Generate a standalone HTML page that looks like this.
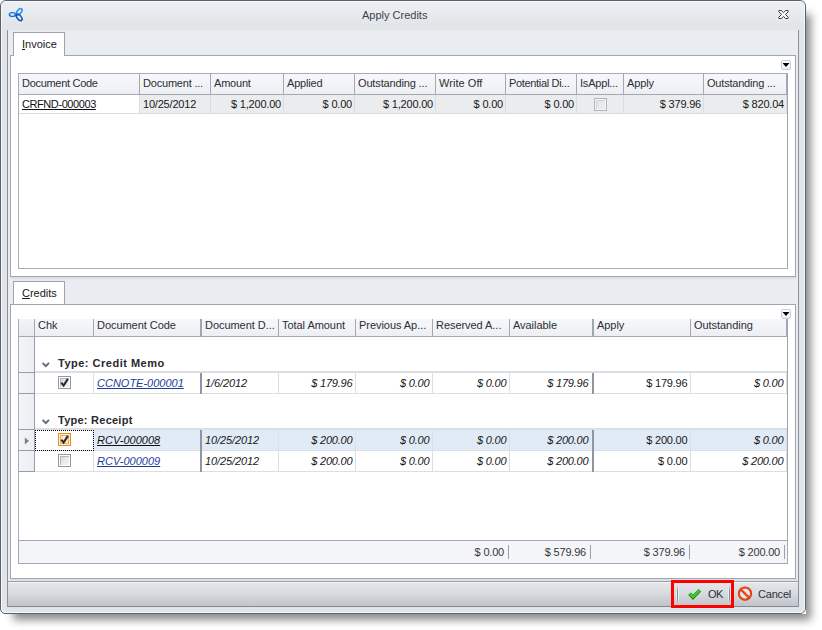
<!DOCTYPE html>
<html>
<head>
<meta charset="utf-8">
<title>Apply Credits</title>
<style>
html,body{margin:0;padding:0;}
body{width:822px;height:630px;background:#fff;position:relative;overflow:hidden;
 font-family:"Liberation Sans",Arial,sans-serif;font-size:11px;color:#16181b;letter-spacing:-0.2px;}
.a{position:absolute;box-sizing:border-box;}
.t{position:absolute;white-space:nowrap;line-height:13px;height:13px;}
.r{text-align:right;}
.i{font-style:italic;}
.b{font-weight:bold;}
.lnk{color:#1f3d9c;text-decoration:underline;font-style:italic;letter-spacing:0;}
/* window */
#shadow{border-radius:6px 6px 5px 5px;box-shadow:9px 10px 9px -4px rgba(0,0,0,.45);}
#win{left:0;top:0;width:806px;height:614px;border:1px solid #59616d;border-radius:6px 6px 6px 5px;background:#e1e5e9;}
#winhi{left:1px;top:1px;width:804px;height:612px;border:1px solid #f7f8f9;border-radius:5px;}
#title{left:2px;top:2px;width:802px;height:28px;background:linear-gradient(#eef0f3,#e6e9ec 55%,#e2e6e8 80%,#e2e6e8);border-radius:4px 4px 0 0;}
#panel{left:7px;top:30px;width:792px;height:552px;background:#e9ecf1;border-left:1px solid #8c9199;border-right:1px solid #8c9199;}
.page{background:#fff;border:1px solid #a0a6b0;}
.tab{background:#fff;border:1px solid #9da3ae;border-bottom:none;}
/* grid */
.grid{border:1px solid #a8aeb8;background:#fff;}
.hd{background:linear-gradient(#f6f7fa,#f2f4f7 50%,#eceef3);border-right:1px solid #a3a9b3;border-bottom:1px solid #a3a9b3;}
.hd .t{left:3px;top:3px;color:#2a2e35;letter-spacing:-0.2px;}
.cell{background:#ebecee;border-right:1px solid #d9dbdf;border-bottom:1px solid #d9dbdf;}
.cw{background:#fff;border-right:1px solid #dcdee2;border-bottom:1px solid #dcdee2;}
.cs{background:#e1ebf6;border-right:1px solid #dcdfe4;border-bottom:1px solid #dcdfe4;}
.ind{background:linear-gradient(90deg,#f3f4f7,#eceef2);border-right:1px solid #969da8;border-bottom:1px solid #969da8;}
.cb{width:13px;height:13px;border:1px solid #8e99a8;background:#fff;}
.cb:before{content:"";position:absolute;left:1px;top:1px;width:9px;height:9px;background:linear-gradient(135deg,#d0d1d3,#e8e8e9 45%,#f3f3f3);box-shadow:inset 1px 1px 0 #b6b7ba;}
.cb.d{border-color:#b1b5bc;background:#f4f4f5;}
.cb.d:before{background:linear-gradient(135deg,#e2e2e4,#efeff0);box-shadow:inset 1px 1px 0 #d2d3d6;}
.cb.h{border-color:#d9932f;background:#fdefcc;}
.cb.h:before{background:#fbe8d2;box-shadow:inset 0 0 0 1px #f5a660;}
.thick{background:#8f96a0;}
</style>
</head>
<body>
<div id="shadow" class="a " style="left:0px;top:0px;width:806px;height:614px;"></div>
<div class="a " style="left:801px;top:609px;width:5px;height:5px;background:#fff"></div>
<div id="win" class="a " style="left:0px;top:0px;width:806px;height:614px;"></div>
<div id="winhi" class="a " style="left:1px;top:1px;width:804px;height:612px;"></div>
<div id="title" class="a " style="left:2px;top:2px;width:802px;height:28px;"></div>
<div id="panel" class="a " style="left:7px;top:30px;width:792px;height:552px;"></div>
<svg class="a" style="left:6px;top:5px" width="20" height="19" viewBox="6 5 20 19">
<g fill="none" stroke-width="1.5">
<ellipse cx="12.4" cy="14.5" rx="3.0" ry="1.9" stroke="#0f6fe0" stroke-width="1.4"/>
<ellipse cx="19.2" cy="11.8" rx="3.8" ry="2.0" transform="rotate(-50 19.2 11.8)" stroke="#2590f2"/>
<ellipse cx="19.2" cy="17.4" rx="3.8" ry="2.0" transform="rotate(50 19.2 17.4)" stroke="#0c55b8"/>
</g></svg>
<div id="ttl" class="t " style="left:362px;top:9px;color:#3a424e;letter-spacing:0">Apply Credits</div>
<svg class="a" style="left:778px;top:10px" width="11" height="9" viewBox="0 0 11 9">
<path d="M1 0.5 L3.3 0.5 L5.5 2.6 L7.7 0.5 L10 0.5 Q10.8 1.1 10.2 1.8 L7.4 4.5 L10.2 7.2 Q10.8 7.9 10 8.5 L7.7 8.5 L5.5 6.4 L3.3 8.5 L1 8.5 Q0.2 7.9 0.8 7.2 L3.6 4.5 L0.8 1.8 Q0.2 1.1 1 0.5 Z" fill="#fff" stroke="#33373d" stroke-width="1" stroke-linejoin="round"/>
</svg>
<div class="a page" style="left:10px;top:55px;width:786px;height:222px;"></div>
<div class="a tab" style="left:13px;top:32px;width:52px;height:24px;"></div>
<div id="tabinv" class="t " style="left:22px;top:38px;letter-spacing:0"><u>I</u>nvoice</div>
<div class="a " style="left:781px;top:60px;width:10px;height:10px;border:1px solid #c9cdd4;border-radius:2px;background:linear-gradient(#fff,#eceef2);"></div>
<svg class="a" style="left:782px;top:63px" width="8" height="4" viewBox="0 0 8 4"><path d="M0.5 0 L7.5 0 L4 4 Z" fill="#000"/></svg>
<div class="a grid" style="left:18px;top:73px;width:770px;height:196px;"></div>
<div class="a hd" style="left:19px;top:74px;width:121px;height:21px;"><div class="t" id="h1_0" style="letter-spacing:-0.3px">Document Code</div></div>
<div class="a cw" style="left:19px;top:95px;width:121px;height:19px;"></div>
<div id="v1_0" class="t " style="left:22px;top:98px;color:#111;letter-spacing:-0.42px"><u>CRFND-000003</u></div>
<div class="a hd" style="left:140px;top:74px;width:71px;height:21px;"><div class="t" id="h1_1" style="letter-spacing:-0.2px">Document ...</div></div>
<div class="a cell" style="left:140px;top:95px;width:71px;height:19px;"></div>
<div id="v1_1" class="t " style="left:143px;top:98px;">10/25/2012</div>
<div class="a hd" style="left:211px;top:74px;width:73px;height:21px;"><div class="t" id="h1_2" style="letter-spacing:-0.2px">Amount</div></div>
<div class="a cell" style="left:211px;top:95px;width:73px;height:19px;"></div>
<div id="v1_2" class="t r " style="right:541px;top:98px;">$ 1,200.00</div>
<div class="a hd" style="left:284px;top:74px;width:71px;height:21px;"><div class="t" id="h1_3" style="letter-spacing:-0.2px">Applied</div></div>
<div class="a cell" style="left:284px;top:95px;width:71px;height:19px;"></div>
<div id="v1_3" class="t r " style="right:470px;top:98px;">$ 0.00</div>
<div class="a hd" style="left:355px;top:74px;width:81px;height:21px;"><div class="t" id="h1_4" style="letter-spacing:-0.15px">Outstanding ...</div></div>
<div class="a cell" style="left:355px;top:95px;width:81px;height:19px;"></div>
<div id="v1_4" class="t r " style="right:389px;top:98px;">$ 1,200.00</div>
<div class="a hd" style="left:436px;top:74px;width:70px;height:21px;"><div class="t" id="h1_5" style="letter-spacing:0.05px">Write Off</div></div>
<div class="a cell" style="left:436px;top:95px;width:70px;height:19px;"></div>
<div id="v1_5" class="t r " style="right:319px;top:98px;">$ 0.00</div>
<div class="a hd" style="left:506px;top:74px;width:71px;height:21px;"><div class="t" id="h1_6" style="letter-spacing:-0.33px">Potential Di...</div></div>
<div class="a cell" style="left:506px;top:95px;width:71px;height:19px;"></div>
<div id="v1_6" class="t r " style="right:248px;top:98px;">$ 0.00</div>
<div class="a hd" style="left:577px;top:74px;width:47px;height:21px;"><div class="t" id="h1_7" style="letter-spacing:-0.2px">IsAppl...</div></div>
<div class="a cell" style="left:577px;top:95px;width:47px;height:19px;"></div>
<div class="a cb d" style="left:594px;top:98px;width:13px;height:13px;"></div>
<div class="a hd" style="left:624px;top:74px;width:80px;height:21px;"><div class="t" id="h1_8" style="letter-spacing:-0.1px">Apply</div></div>
<div class="a cell" style="left:624px;top:95px;width:80px;height:19px;"></div>
<div id="v1_8" class="t r " style="right:121px;top:98px;">$ 379.96</div>
<div class="a hd" style="left:704px;top:74px;width:83px;height:21px;"><div class="t" id="h1_9" style="letter-spacing:-0.2px">Outstanding ...</div></div>
<div class="a cell" style="left:704px;top:95px;width:83px;height:19px;"></div>
<div id="v1_9" class="t r " style="right:38px;top:98px;">$ 820.04</div>
<div class="a " style="left:787px;top:73px;width:1px;height:196px;background:#a0a6b0"></div>
<div class="a page" style="left:10px;top:304px;width:786px;height:275px;"></div>
<div class="a tab" style="left:13px;top:281px;width:52px;height:23px;"></div>
<div class="a " style="left:11px;top:277px;width:786px;height:3px;background:linear-gradient(#d6dae0,#e9ecf1)"></div>
<div id="tabcr" class="t " style="left:22px;top:287px;letter-spacing:0"><u>C</u>redits</div>
<div class="a " style="left:781px;top:309px;width:10px;height:10px;border:1px solid #c9cdd4;border-radius:2px;background:linear-gradient(#fff,#eceef2);"></div>
<svg class="a" style="left:782px;top:312px" width="8" height="4" viewBox="0 0 8 4"><path d="M0.5 0 L7.5 0 L4 4 Z" fill="#000"/></svg>
<div class="a " style="left:18px;top:319px;width:1px;height:245px;background:#a8aeb8"></div>
<div class="a " style="left:787px;top:319px;width:1px;height:245px;background:#a0a6b0"></div>
<div class="a hd" style="left:19px;top:319px;width:16px;height:18px;background:linear-gradient(#f3f4f7,#e7eaef);"></div>
<div class="a hd" style="left:35px;top:319px;width:59px;height:18px;overflow:hidden;"><div class="t" style="top:0px;left:3px;letter-spacing:-0.05px" id="h2_0">Chk</div></div>
<div class="a hd" style="left:94px;top:319px;width:106px;height:18px;overflow:hidden;border-right:none;"><div class="t" style="top:0px;left:3px;letter-spacing:-0.05px" id="h2_1">Document Code</div></div>
<div class="a hd" style="left:202px;top:319px;width:77px;height:18px;overflow:hidden;"><div class="t" style="top:0px;left:3px;letter-spacing:-0.05px" id="h2_2">Document D...</div></div>
<div class="a hd" style="left:279px;top:319px;width:77px;height:18px;overflow:hidden;"><div class="t" style="top:0px;left:3px;letter-spacing:-0.05px" id="h2_3">Total Amount</div></div>
<div class="a hd" style="left:356px;top:319px;width:77px;height:18px;overflow:hidden;"><div class="t" style="top:0px;left:3px;letter-spacing:-0.05px" id="h2_4">Previous Ap...</div></div>
<div class="a hd" style="left:433px;top:319px;width:77px;height:18px;overflow:hidden;"><div class="t" style="top:0px;left:3px;letter-spacing:-0.05px" id="h2_5">Reserved A...</div></div>
<div class="a hd" style="left:510px;top:319px;width:82px;height:18px;overflow:hidden;border-right:none;"><div class="t" style="top:0px;left:3px;letter-spacing:-0.05px" id="h2_6">Available</div></div>
<div class="a hd" style="left:594px;top:319px;width:97px;height:18px;overflow:hidden;"><div class="t" style="top:0px;left:3px;letter-spacing:-0.05px" id="h2_7">Apply</div></div>
<div class="a hd" style="left:691px;top:319px;width:96px;height:18px;overflow:hidden;"><div class="t" style="top:0px;left:3px;letter-spacing:-0.05px" id="h2_8">Outstanding</div></div>
<div class="a ind" style="left:19px;top:337px;width:16px;height:36px;"></div>
<div class="a ind" style="left:19px;top:373px;width:16px;height:21px;"></div>
<div class="a ind" style="left:19px;top:394px;width:16px;height:36px;"></div>
<div class="a ind" style="left:19px;top:430px;width:16px;height:21px;"></div>
<div class="a ind" style="left:19px;top:451px;width:16px;height:21px;"></div>
<div class="a " style="left:35px;top:371px;width:752px;height:2px;background:linear-gradient(#dde0e4,#d9dce1);"></div>
<svg class="a" style="left:41px;top:362px" width="10" height="7" viewBox="0 0 10 7"><path d="M1.6 0.8 L4.8 4.1 L8.0 0.8" fill="none" stroke="#636973" stroke-width="1.9"/></svg>
<div id="grp1" class="t b" style="left:58px;top:357px;letter-spacing:0.5px;color:#26292e">Type: Credit Memo</div>
<div class="a " style="left:35px;top:428px;width:752px;height:2px;background:linear-gradient(#dde0e4,#d9dce1);"></div>
<svg class="a" style="left:41px;top:419px" width="10" height="7" viewBox="0 0 10 7"><path d="M1.6 0.8 L4.8 4.1 L8.0 0.8" fill="none" stroke="#636973" stroke-width="1.9"/></svg>
<div id="grp2" class="t b" style="left:58px;top:414px;letter-spacing:0.25px;color:#26292e">Type: Receipt</div>
<div class="a cw" style="left:35px;top:373px;width:59px;height:21px;"></div>
<div class="a cw" style="left:94px;top:373px;width:106px;height:21px;border-right:none;"></div>
<div class="a cw" style="left:202px;top:373px;width:77px;height:21px;"></div>
<div class="a cw" style="left:279px;top:373px;width:77px;height:21px;"></div>
<div class="a cw" style="left:356px;top:373px;width:77px;height:21px;"></div>
<div class="a cw" style="left:433px;top:373px;width:77px;height:21px;"></div>
<div class="a cw" style="left:510px;top:373px;width:82px;height:21px;border-right:none;"></div>
<div class="a cw" style="left:594px;top:373px;width:97px;height:21px;"></div>
<div class="a cw" style="left:691px;top:373px;width:96px;height:21px;"></div>
<div class="a cb" style="left:58px;top:376px;width:13px;height:13px;"><svg width="11" height="11" viewBox="0 0 11 11" style="position:absolute;left:0;top:0"><path d="M2.3 5.6 L4.6 8.6 L8.9 1.9" fill="none" stroke="#24272c" stroke-width="2"/></svg></div>
<div id="c_373" class="t lnk" style="left:97px;top:377px;">CCNOTE-000001</div>
<div id="d_373" class="t i" style="left:205px;top:377px;letter-spacing:-0.1px">1/6/2012</div>
<div id="r373_0" class="t r i" style="right:469.6px;top:377px;">$ 179.96</div>
<div id="r373_1" class="t r i" style="right:392.6px;top:377px;">$ 0.00</div>
<div id="r373_2" class="t r i" style="right:315.6px;top:377px;">$ 0.00</div>
<div id="r373_3" class="t r i" style="right:233.60000000000002px;top:377px;">$ 179.96</div>
<div id="r373_4" class="t r " style="right:134.60000000000002px;top:377px;">$ 179.96</div>
<div id="r373_5" class="t r i" style="right:38.60000000000002px;top:377px;">$ 0.00</div>
<div class="a cw" style="left:35px;top:430px;width:59px;height:21px;"></div>
<div class="a cs" style="left:94px;top:430px;width:106px;height:21px;border-right:none;"></div>
<div class="a cs" style="left:202px;top:430px;width:77px;height:21px;"></div>
<div class="a cs" style="left:279px;top:430px;width:77px;height:21px;"></div>
<div class="a cs" style="left:356px;top:430px;width:77px;height:21px;"></div>
<div class="a cs" style="left:433px;top:430px;width:77px;height:21px;"></div>
<div class="a cs" style="left:510px;top:430px;width:82px;height:21px;border-right:none;"></div>
<div class="a cs" style="left:594px;top:430px;width:97px;height:21px;"></div>
<div class="a cs" style="left:691px;top:430px;width:96px;height:21px;"></div>
<div class="a cb h" style="left:58px;top:433px;width:13px;height:13px;"><svg width="11" height="11" viewBox="0 0 11 11" style="position:absolute;left:0;top:0"><path d="M2.3 5.6 L4.6 8.6 L8.9 1.9" fill="none" stroke="#24272c" stroke-width="2"/></svg></div>
<div id="c_430" class="t lnk" style="left:97px;top:434px;color:#111;">RCV-000008</div>
<div id="d_430" class="t i" style="left:205px;top:434px;letter-spacing:-0.1px">10/25/2012</div>
<div id="r430_0" class="t r i" style="right:469.6px;top:434px;">$ 200.00</div>
<div id="r430_1" class="t r i" style="right:392.6px;top:434px;">$ 0.00</div>
<div id="r430_2" class="t r i" style="right:315.6px;top:434px;">$ 0.00</div>
<div id="r430_3" class="t r i" style="right:233.60000000000002px;top:434px;">$ 200.00</div>
<div id="r430_4" class="t r " style="right:134.60000000000002px;top:434px;">$ 200.00</div>
<div id="r430_5" class="t r i" style="right:38.60000000000002px;top:434px;">$ 0.00</div>
<div class="a cw" style="left:35px;top:451px;width:59px;height:21px;"></div>
<div class="a cw" style="left:94px;top:451px;width:106px;height:21px;border-right:none;"></div>
<div class="a cw" style="left:202px;top:451px;width:77px;height:21px;"></div>
<div class="a cw" style="left:279px;top:451px;width:77px;height:21px;"></div>
<div class="a cw" style="left:356px;top:451px;width:77px;height:21px;"></div>
<div class="a cw" style="left:433px;top:451px;width:77px;height:21px;"></div>
<div class="a cw" style="left:510px;top:451px;width:82px;height:21px;border-right:none;"></div>
<div class="a cw" style="left:594px;top:451px;width:97px;height:21px;"></div>
<div class="a cw" style="left:691px;top:451px;width:96px;height:21px;"></div>
<div class="a cb" style="left:58px;top:454px;width:13px;height:13px;"></div>
<div id="c_451" class="t lnk" style="left:97px;top:455px;">RCV-000009</div>
<div id="d_451" class="t i" style="left:205px;top:455px;letter-spacing:-0.1px">10/25/2012</div>
<div id="r451_0" class="t r i" style="right:469.6px;top:455px;">$ 200.00</div>
<div id="r451_1" class="t r i" style="right:392.6px;top:455px;">$ 0.00</div>
<div id="r451_2" class="t r i" style="right:315.6px;top:455px;">$ 0.00</div>
<div id="r451_3" class="t r i" style="right:233.60000000000002px;top:455px;">$ 200.00</div>
<div id="r451_4" class="t r " style="right:134.60000000000002px;top:455px;">$ 0.00</div>
<div id="r451_5" class="t r i" style="right:38.60000000000002px;top:455px;">$ 200.00</div>
<div class="a " style="left:200px;top:319px;width:2px;height:18px;background:#a0a6b0"></div>
<div class="a thick" style="left:200px;top:373px;width:2px;height:21px;"></div>
<div class="a thick" style="left:200px;top:430px;width:2px;height:42px;"></div>
<div class="a " style="left:592px;top:319px;width:2px;height:18px;background:#a0a6b0"></div>
<div class="a thick" style="left:592px;top:373px;width:2px;height:21px;"></div>
<div class="a thick" style="left:592px;top:430px;width:2px;height:42px;"></div>
<div class="a " style="left:35px;top:430px;width:59px;height:21px;border:1px dotted #000;"></div>
<svg class="a" style="left:24px;top:437px" width="6" height="8" viewBox="0 0 6 8"><path d="M0.8 0.4 L5 4 L0.8 7.6 Z" fill="#7b8089"/></svg>
<div class="a " style="left:18px;top:540px;width:770px;height:24px;background:#f3f5f8;border:1px solid #a3a9b3;"></div>
<div class="a " style="left:508px;top:545px;width:1px;height:14px;background:#9aa0aa"></div>
<div class="a " style="left:590px;top:545px;width:1px;height:14px;background:#9aa0aa"></div>
<div class="a " style="left:689px;top:545px;width:1px;height:14px;background:#9aa0aa"></div>
<div class="a " style="left:784px;top:545px;width:1px;height:14px;background:#9aa0aa"></div>
<div id="f0" class="t r " style="right:318px;top:546px;color:#33373e">$ 0.00</div>
<div id="f1" class="t r " style="right:236px;top:546px;color:#33373e">$ 579.96</div>
<div id="f2" class="t r " style="right:137px;top:546px;color:#33373e">$ 379.96</div>
<div id="f3" class="t r " style="right:42px;top:546px;color:#33373e">$ 200.00</div>
<div class="a " style="left:11px;top:579px;width:786px;height:2px;background:linear-gradient(#d6dae0,#e4e7ec)"></div>
<div class="a " style="left:7px;top:581px;width:792px;height:26px;background:linear-gradient(#e5e7ea,#d8dbdf 45%,#c1c4c8);border:1px solid #8c9199;border-top-color:#9a9fa7;border-bottom-color:#84888e;box-shadow:inset 0 1px 0 #f4f5f6;"></div>
<div class="a " style="left:676px;top:585px;width:1px;height:19px;background:linear-gradient(rgba(255,255,255,0),rgba(255,255,255,.6) 40%,rgba(255,255,255,.6) 60%,rgba(255,255,255,0))"></div>
<div class="a " style="left:677px;top:585px;width:1px;height:19px;background:linear-gradient(rgba(125,129,136,0),#7d8188 35%,#7d8188 65%,rgba(125,129,136,0))"></div>
<div class="a " style="left:678px;top:585px;width:1px;height:19px;background:linear-gradient(rgba(255,255,255,0),rgba(255,255,255,.8) 40%,rgba(255,255,255,.8) 60%,rgba(255,255,255,0))"></div>
<div class="a " style="left:728px;top:585px;width:1px;height:19px;background:linear-gradient(rgba(255,255,255,0),rgba(255,255,255,.6) 40%,rgba(255,255,255,.6) 60%,rgba(255,255,255,0))"></div>
<div class="a " style="left:729px;top:585px;width:1px;height:19px;background:linear-gradient(rgba(125,129,136,0),#7d8188 35%,#7d8188 65%,rgba(125,129,136,0))"></div>
<div class="a " style="left:730px;top:585px;width:1px;height:19px;background:linear-gradient(rgba(255,255,255,0),rgba(255,255,255,.8) 40%,rgba(255,255,255,.8) 60%,rgba(255,255,255,0))"></div>
<svg class="a" style="left:687px;top:587px" width="15" height="14" viewBox="0 0 15 14">
<path d="M2.5 6.7 L6 10.3 L12.8 3.2" fill="none" stroke="#2c7d25" stroke-width="3.7" stroke-linejoin="miter"/>
<path d="M2.7 6.6 L6 9.9 L12.6 3.1" fill="none" stroke="#3fcb2a" stroke-width="2.3" stroke-linejoin="miter"/>
</svg>
<div id="ok" class="t " style="left:708px;top:588px;color:#2c3038;letter-spacing:-0.6px">OK</div>
<svg class="a" style="left:737px;top:586px" width="16" height="16" viewBox="0 0 16 16">
<circle cx="8" cy="7.6" r="6.1" fill="rgba(255,255,255,.35)" stroke="#c8360c" stroke-width="2.1"/>
<circle cx="8" cy="7.6" r="6.1" fill="none" stroke="#f2481a" stroke-width="1.5"/>
<path d="M3.8 3.4 L12.2 11.8" stroke="#c8360c" stroke-width="2.1"/>
<path d="M3.8 3.4 L12.2 11.8" stroke="#f2481a" stroke-width="1.5"/>
</svg>
<div id="cancel" class="t " style="left:758px;top:588px;color:#2c3038;letter-spacing:-0.2px">Cancel</div>
<div class="a " style="left:671px;top:580px;width:63px;height:28px;border:3px solid #fd0000;"></div>
</body>
</html>
